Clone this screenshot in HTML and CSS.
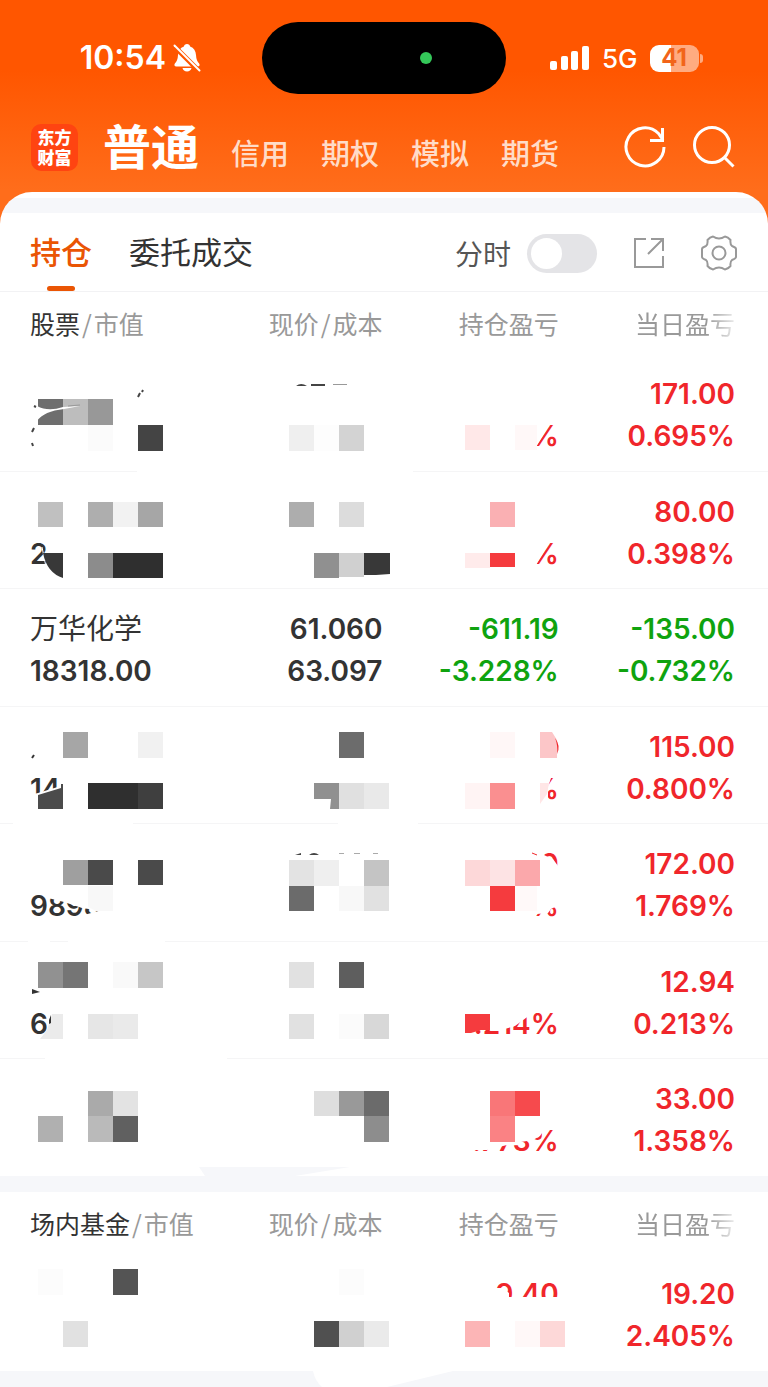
FILE: index.html
```html
<!DOCTYPE html>
<html lang="zh-CN">

<head>
  <meta charset="utf-8" />
  <meta name="viewport" content="width=device-width, initial-scale=1" />
  <title>持仓</title>
  <link rel="stylesheet" href="styles.css">
</head>

<body>
<header class="top">
  <div class="status">
    <div class="status-left">
      <span class="clock">10:54</span>
      <svg class="bell" width="28" height="30" viewBox="0 0 28 30">
        <path d="M14 1c1.700 0 2.900 1 3.100 2.500 3.800 1.300 5.700 4.500 5.900 8.500.2 4.500 1.500 6.500 3 8.300 1.200 1.600.6 3.200-1.400 3.200H3.400c-2 0-2.600-1.600-1.400-3.200 1.500-1.800 2.800-3.800 3-8.300.2-4 2.100-7.200 5.900-8.500C11.100 2 12.300 1 14 1z" fill="#fff"/>
        <path d="M9.500 25h9c-.5 2.200-2.200 3.500-4.500 3.500S10 27.200 9.500 25z" fill="#fff"/>
        <path d="M0 2l27 27" stroke="#ff5700" stroke-width="5"/>
        <path d="M1.500 2.500l25 25" stroke="#fff" stroke-width="2" stroke-linecap="round"/>
      </svg>
    </div>
    <div class="island"><span class="dot"></span></div>
    <div class="status-right">
      <svg width="40" height="26" viewBox="0 0 40 26" fill="#fff">
        <rect x="0" y="16" width="7" height="9" rx="2"/>
        <rect x="11" y="11" width="7" height="14" rx="2"/>
        <rect x="21" y="6" width="7" height="19" rx="2"/>
        <rect x="32" y="1" width="7" height="24" rx="2"/>
      </svg>
      <span class="net">5G</span>
      <div class="battery"><span>41</span></div>
    </div>
  </div>

  <nav class="nav">
    <a class="logo" href="#"><span>东方</span><span>财富</span></a>
    <div class="accounts">
      <a class="current" href="#">普通</a>
      <a href="#">信用</a>
      <a href="#">期权</a>
      <a href="#">模拟</a>
      <a href="#">期货</a>
    </div>
    <button class="icon" type="button" aria-label="刷新">
      <svg width="42" height="42" viewBox="0 0 42 42" fill="none" stroke="#fff" stroke-width="3">
        <path d="M40 21A19 19 0 1 1 34.500 7.500L39 14"/>
        <path d="M38.500 2v12.500H26"/>
      </svg>
    </button>
    <button class="icon" type="button" aria-label="搜索">
      <svg width="42" height="42" viewBox="0 0 42 42" fill="none" stroke="#fff" stroke-width="3">
        <circle cx="19" cy="19" r="17.500"/>
        <path d="M31 31l9.500 9.500"/>
      </svg>
    </button>
  </nav>
</header>

<main class="card">
  <div class="tabs">
    <a class="tab active" href="#">持仓</a>
    <a class="tab" href="#">委托成交</a>
    <label class="switch">分时 <input type="checkbox" role="switch"></label>
    <button class="icon share" type="button" aria-label="分享">
      <svg width="32" height="32" viewBox="0 0 32 32" fill="none" stroke="#999" stroke-width="2">
        <path d="M13 2H2v28h28V19"/>
        <path d="M18 2h12v12M30 2L15 17"/>
      </svg>
    </button>
    <button class="icon" type="button" aria-label="设置">
      <svg width="36" height="36" viewBox="0 0 36 36" fill="none" stroke="#999" stroke-width="2" stroke-linejoin="round">
        <path d="M12 1.500Q18 5.500 24 1.500Q27 2 29.500 5Q29 9.500 31 11Q35 12.500 35 14V22Q35 23.500 31 25Q29 26.500 29.500 31Q27 34 24 34.500Q18 30.500 12 34.500Q9 34 6.500 31Q7 26.500 5 25Q1 23.500 1 22V14Q1 12.500 5 11Q7 9.500 6.500 5Q9 2 12 1.500z"/>
        <circle cx="18" cy="18" r="6.500"/>
      </svg>
    </button>
  </div>

  <table class="list">
    <thead>
      <tr>
        <th><b>股票</b><i>/</i>市值</th>
        <th>现价<i>/</i>成本</th>
        <th>持仓盈亏</th>
        <th class="fade">当日盈亏</th>
      </tr>
    </thead>
    <tbody>
      <tr>
        <td>
          <svg class="mosaic" width="176" height="118">
            <rect x="8" y="45" width="25" height="26" fill="#6e6e6e"/>
            <rect x="33" y="45" width="25" height="26" fill="#bdbdbd"/>
            <rect x="58" y="45" width="25" height="26" fill="#989898"/>
            <rect x="58" y="71" width="25" height="26" fill="#fbfbfb"/>
            <rect x="108" y="71" width="25" height="26" fill="#444"/>
            <path d="M7 52Q18 58 33 53L50 52L34 55Q14 57 7 67z" fill="#fff"/>
            <path d="M38 52l12-1" stroke="#999" fill="none"/>
            <path d="M4 52l2 1M2 78l2-4M2 89l1 3M108 43l2-4M112 38l1-2" stroke="#444" stroke-width="2" fill="none"/>
            <rect x="107" y="116" width="276" height="3" fill="#fff"/>
          </svg>
        </td>
        <td>
          <svg class="mosaic" width="176" height="118">
            <path d="M89 32Q94 28 100 32zM104 30h14v2h-14z" fill="#444"/>
            <path d="M126 30h14v1h-14z" fill="#999"/>
            <rect x="82" y="71" width="25" height="26" fill="#efefef"/>
            <rect x="107" y="71" width="25" height="26" fill="#fdfdfd"/>
            <rect x="132" y="71" width="25" height="26" fill="#d3d3d3"/>
          </svg>
        </td>
        <td class="up">
          <p></p><p>%</p>
          <svg class="mosaic" width="176" height="118">
            <path d="M146 68H168L153 93V97H146z" fill="#fff"/>
            <rect x="82" y="71" width="25" height="25" fill="#ffe8e8"/>
            <rect x="132" y="71" width="22" height="25" fill="#fff8f8"/>
          </svg>
        </td>
        <td class="up"><p>171.00</p><p>0.695%</p></td>
      </tr>
      <tr>
        <td>
          <p></p><p>2</p>
          <svg class="mosaic" width="176" height="118">
            <rect x="8" y="30" width="25" height="25" fill="#c0c0c0"/>
            <rect x="58" y="30" width="25" height="25" fill="#aeaeae"/>
            <rect x="83" y="30" width="25" height="25" fill="#f2f2f2"/>
            <rect x="108" y="30" width="25" height="25" fill="#a6a6a6"/>
            <path d="M12 75L16 95L33 110" stroke="#fff" fill="none"/>
            <path d="M13 81H33V106Q17 101 13 81z" fill="#383838"/>
            <rect x="58" y="81" width="25" height="25" fill="#8c8c8c"/>
            <rect x="83" y="81" width="50" height="25" fill="#2f2f2f"/>
          </svg>
        </td>
        <td>
          <svg class="mosaic" width="176" height="118">
            <rect x="82" y="30" width="25" height="25" fill="#adadad"/>
            <rect x="132" y="30" width="25" height="25" fill="#dcdcdc"/>
            <rect x="107" y="81" width="25" height="25" fill="#909090"/>
            <rect x="132" y="81" width="25" height="24" fill="#d0d0d0"/>
            <path d="M157 81h26v21l-14 1l-12 0z" fill="#383838"/>
          </svg>
        </td>
        <td class="up">
          <p></p><p>%</p>
          <svg class="mosaic" width="176" height="118">
            <path d="M146 68H168L153 93V97H146z" fill="#fff"/>
            <rect x="107" y="30" width="25" height="25" fill="#fab0b3"/>
            <rect x="82" y="81" width="25" height="15" fill="#ffebeb"/>
            <rect x="107" y="81" width="25" height="14" fill="#f53b3e"/>
          </svg>
        </td>
        <td class="up"><p>80.00</p><p>0.398%</p></td>
      </tr>
      <tr>
        <td><p class="name">万华化学</p><p>18318.00</p></td>
        <td><p>61.060</p><p>63.097</p></td>
        <td class="down"><p>-611.19</p><p>-3.228%</p></td>
        <td class="down"><p>-135.00</p><p>-0.732%</p></td>
      </tr>
      <tr>
        <td>
          <p></p><p>14</p>
          <svg class="mosaic" width="176" height="118">
            <path d="M2 51l2-3" stroke="#333" stroke-width="2"/>
            <rect x="33" y="25" width="25" height="26" fill="#a6a6a6"/>
            <rect x="108" y="25" width="25" height="26" fill="#f1f1f1"/>
            <path d="M0 88L8 86L31 79V104H0z" fill="#fff"/>
            <path d="M8 88L31 81V77H33V102H8z" fill="#4b4b4b"/>
            <rect x="58" y="76" width="50" height="26" fill="#2f2f2f"/>
            <rect x="108" y="76" width="25" height="26" fill="#3f3f3f"/>
            <rect x="-17" y="115" width="120" height="3" fill="#fff"/>
          </svg>
        </td>
        <td>
          <svg class="mosaic" width="176" height="118">
            <rect x="132" y="25" width="25" height="26" fill="#6c6c6c"/>
            <path d="M107 76H132V102H123L124 92H107z" fill="#909090"/>
            <rect x="132" y="76" width="25" height="26" fill="#e0e0e0"/>
            <rect x="157" y="76" width="25" height="26" fill="#e9e9e9"/>
            <rect x="131" y="115" width="80" height="3" fill="#fff"/>
          </svg>
        </td>
        <td class="up">
          <p></p><p>%</p>
          <svg class="mosaic" width="176" height="118">
            <path d="M146 68H169L165 80V94H146z" fill="#fff"/>
            <rect x="107" y="25" width="25" height="26" fill="#fff7f7"/>
            <path d="M157 25H169L174 33V51H157z" fill="#fcc6c8"/>
            <path d="M172 31Q178 39 174 47Q175 38 172 31z" fill="#f0262b"/>
            <rect x="82" y="76" width="25" height="26" fill="#fff4f4"/>
            <rect x="107" y="76" width="25" height="26" fill="#fa8f90"/>
            <path d="M157 76H166L164 87L157 97z" fill="#ffe6e6"/>
          </svg>
        </td>
        <td class="up"><p>115.00</p><p>0.800%</p></td>
      </tr>
      <tr>
        <td>
          <p></p><p>9898</p>
          <svg class="mosaic" width="176" height="118">
            <path d="M18 66V74L34 78L52 84L72 87V66z" fill="#fff"/>
            <path d="M50 97L54 91L72 86V97z" fill="#fff"/>
            <rect x="33" y="36" width="25" height="25" fill="#9f9f9f"/>
            <rect x="58" y="36" width="25" height="25" fill="#4a4a4a"/>
            <rect x="108" y="36" width="25" height="25" fill="#4a4a4a"/>
            <path d="M58 62h25v25H66L58 83z" fill="#f8f8f8"/>
            <rect x="-2" y="116" width="22" height="3" fill="#fff"/>
            <rect x="38" y="116" width="97" height="3" fill="#fff"/>
          </svg>
        </td>
        <td>
          <svg class="mosaic" width="176" height="118">
            <path d="M88 31L94 29V31zM102 31Q107 27 112 31z" fill="#444"/>
            <path d="M132 29h5v1h-5zM147 29h6v1h-6zM166 29h5v1h-5z" fill="#aaa"/>
            <rect x="82" y="36" width="25" height="26" fill="#e3e3e3"/>
            <rect x="107" y="36" width="25" height="26" fill="#efefef"/>
            <rect x="157" y="36" width="25" height="26" fill="#c4c4c4"/>
            <rect x="82" y="62" width="25" height="25" fill="#6b6b6b"/>
            <rect x="132" y="62" width="25" height="25" fill="#f8f8f8"/>
            <rect x="157" y="62" width="25" height="25" fill="#e1e1e1"/>
          </svg>
        </td>
        <td class="up">
          <p>0</p><p>%</p>
          <svg class="mosaic" width="176" height="118">
            <path d="M154 30H159L163 32L170 35L175 42H178V56H154z" fill="#fff"/>
            <path d="M146 68H178V83H172L168 85L165 89L154 90H146z" fill="#fff"/>
            <path d="M149 29l5 2" stroke="#f0262b"/>
            <rect x="82" y="36" width="25" height="26" fill="#fdd8d9"/>
            <rect x="107" y="36" width="25" height="26" fill="#fde3e4"/>
            <rect x="132" y="36" width="25" height="26" fill="#fba8ab"/>
            <rect x="107" y="62" width="25" height="25" fill="#f53b3e"/>
            <rect x="132" y="62" width="22" height="25" fill="#fff9f9"/>
          </svg>
        </td>
        <td class="up"><p>172.00</p><p>1.769%</p></td>
      </tr>
      <tr>
        <td>
          <p></p><p>6</p>
          <svg class="mosaic" width="176" height="118">
            <rect x="8" y="20" width="25" height="26" fill="#919191"/>
            <rect x="33" y="20" width="25" height="26" fill="#757575"/>
            <rect x="83" y="20" width="25" height="26" fill="#f9f9f9"/>
            <rect x="108" y="20" width="25" height="26" fill="#c6c6c6"/>
            <path d="M2 47L10 50L2 52z" fill="#333"/>
            <path d="M22 72H33V97H10L17 88z" fill="#ebebeb"/>
            <path d="M21 73V81L19 82V78z" fill="#333"/>
            <rect x="58" y="72" width="25" height="25" fill="#e6e6e6"/>
            <rect x="83" y="72" width="25" height="25" fill="#eaeaea"/>
            <rect x="15" y="115" width="182" height="3" fill="#fff"/>
          </svg>
        </td>
        <td>
          <svg class="mosaic" width="176" height="118">
            <rect x="82" y="20" width="25" height="26" fill="#e1e1e1"/>
            <rect x="132" y="20" width="25" height="26" fill="#5e5e5e"/>
            <rect x="82" y="72" width="25" height="25" fill="#e1e1e1"/>
            <rect x="132" y="72" width="25" height="25" fill="#fbfbfb"/>
            <rect x="157" y="72" width="25" height="25" fill="#d8d8d8"/>
          </svg>
        </td>
        <td class="up">
          <p></p><p>.214%</p>
          <svg class="mosaic" width="176" height="118">
            <path d="M100 68H150L147 73L132 84L118 88H100z" fill="#fff"/>
            <path d="M82 72h25v16L98 88L88 91H82z" fill="#f53b3e"/>
          </svg>
        </td>
        <td class="up"><p>12.94</p><p>0.213%</p></td>
      </tr>
      <tr>
        <td>
          <svg class="mosaic" width="176" height="117">
            <rect x="58" y="32" width="25" height="25" fill="#aaa"/>
            <rect x="83" y="32" width="25" height="25" fill="#e3e3e3"/>
            <rect x="8" y="57" width="25" height="26" fill="#b0b0b0"/>
            <rect x="58" y="57" width="25" height="26" fill="#bababa"/>
            <rect x="83" y="57" width="25" height="26" fill="#606060"/>
            <path d="M169 108H320L265 117H175z" fill="#f6f7fa"/>
          </svg>
        </td>
        <td>
          <svg class="mosaic" width="176" height="117">
            <rect x="107" y="32" width="25" height="25" fill="#dedede"/>
            <rect x="132" y="32" width="25" height="25" fill="#999"/>
            <rect x="157" y="32" width="25" height="25" fill="#6b6b6b"/>
            <rect x="157" y="57" width="25" height="26" fill="#8d8d8d"/>
          </svg>
        </td>
        <td class="up">
          <p></p><p>.773%</p>
          <svg class="mosaic" width="176" height="117">
            <path d="M88 68H163L157 77L150 81L132 84L104 91L94 91H88z" fill="#fff"/>
            <rect x="107" y="32" width="25" height="25" fill="#f97678"/>
            <rect x="132" y="32" width="25" height="25" fill="#f64a4d"/>
            <rect x="107" y="57" width="25" height="26" fill="#fa8284"/>
          </svg>
        </td>
        <td class="up"><p>33.00</p><p>1.358%</p></td>
      </tr>
    </tbody>
  </table>

  <table class="list">
    <thead>
      <tr>
        <th><b>场内基金</b><i>/</i>市值</th>
        <th>现价<i>/</i>成本</th>
        <th>持仓盈亏</th>
        <th class="fade">当日盈亏</th>
      </tr>
    </thead>
    <tbody>
      <tr>
        <td>
          <svg class="mosaic" width="176" height="117">
            <rect x="8" y="15" width="25" height="26" fill="#fcfcfc"/>
            <rect x="83" y="15" width="25" height="26" fill="#545454"/>
            <rect x="33" y="67" width="25" height="26" fill="#e1e1e1"/>
          </svg>
        </td>
        <td>
          <svg class="mosaic" width="176" height="117">
            <rect x="132" y="15" width="25" height="26" fill="#fcfcfc"/>
            <rect x="107" y="67" width="25" height="26" fill="#505050"/>
            <rect x="132" y="67" width="25" height="26" fill="#d0d0d0"/>
            <rect x="157" y="67" width="25" height="26" fill="#eaeaea"/>
            <path d="M106 117Q108 127 115 133H180L246 117z" fill="#fff"/>
          </svg>
        </td>
        <td class="up">
          <p>9.40</p><p></p>
          <svg class="mosaic" width="176" height="117">
            <path d="M110 43H178V54H110zM110 34H120L126 39V46H110z" fill="#fff"/>
            <rect x="82" y="67" width="25" height="26" fill="#fcb5b6"/>
            <rect x="132" y="67" width="25" height="26" fill="#fff8f8"/>
            <rect x="157" y="67" width="25" height="26" fill="#fdd8d8"/>
          </svg>
        </td>
        <td class="up"><p>19.20</p><p>2.405%</p></td>
      </tr>
    </tbody>
  </table>
</main>
</body>
</html>
```
FILE: styles.css
```css
* { box-sizing: border-box; }
body {
  margin: 0;
  background: #f6f7fa;
  color: #333;
  font-family: Inter, "Noto Sans CJK SC", sans-serif;
}
a { color: inherit; text-decoration: none; }
p { margin: 0; }
svg { display: block; }
button { border: 0; padding: 0; background: none; }

/* header */
.top {
  height: 232px;
  padding-top: 22px;
  background: linear-gradient(#ff5600 70px, #ff6d1b 190px);
  color: #fff;
}
.status {
  display: grid;
  grid-template-columns: 1fr 244px 1fr;
  align-items: center;
}
.status-left, .status-right { display: flex; align-items: center; }
.status-left { justify-content: flex-end; gap: 7px; padding-right: 61px; }
.status-right { gap: 12px; padding-left: 44px; }
.clock { font-size: 32px; font-weight: 600; line-height: 38px; }
.island {
  height: 72px;
  padding: 30px 74px;
  border-radius: 36px;
  background: #000;
}
.dot {
  display: block;
  width: 12px;
  height: 12px;
  margin-left: auto;
  border-radius: 50%;
  background: #34c759;
}
.net { font-size: 26px; font-weight: 500; }
.battery {
  position: relative;
  width: 49px;
  height: 27px;
  border-radius: 9px;
  background: linear-gradient(90deg, #fff 42%, #ffab80 42%);
  color: #f26419;
  font-size: 24px;
  font-weight: 700;
  line-height: 26px;
  text-align: center;
}
.battery::after {
  content: "";
  position: absolute;
  top: 9px;
  right: -4px;
  width: 3px;
  height: 9px;
  border-radius: 0 3px 3px 0;
  background: #ffab80;
}

.nav {
  display: flex;
  align-items: center;
  height: 106px;
  padding: 0 33px 0 31px;
}
.logo {
  width: 47px;
  height: 47px;
  padding-top: 3px;
  border-radius: 10px;
  background: #ff4411;
  font-family: "Noto Sans CJK SC", sans-serif;
  font-size: 17px;
  font-weight: 900;
  line-height: 20px;
  text-align: center;
}
.logo span { display: block; }
.accounts {
  display: flex;
  flex: 1;
  align-items: center;
  gap: 32px;
  margin-left: 25px;
  padding-top: 2px;
  color: #ffdcc8;
  font-size: 29px;
  font-weight: 500;
  line-height: 44px;
}
.accounts a { padding-top: 14px; }
.accounts .current {
  padding-top: 0;
  color: #fff;
  font-size: 48px;
  font-weight: 700;
  line-height: 60px;
}
.nav .icon + .icon { margin-left: 27px; }

/* card */
.card {
  margin-top: -40px;
  padding-top: 21px;
  border-radius: 32px 32px 0 0;
  background: linear-gradient(#fff 6px, #f6f7fa 6px, #f6f7fa 21px, #fff 21px, #fff 100px, transparent 100px);
}
.tabs {
  display: flex;
  align-items: center;
  height: 79px;
  padding: 2px 31px 0 30px;
  border-bottom: 1px solid #f2f2f4;
}
.tab {
  position: relative;
  margin-right: 37px;
  font-size: 31px;
  font-weight: 400;
  line-height: 76px;
}
.active { color: #ea5504; font-weight: 500; }
.active::after {
  content: "";
  position: absolute;
  left: 50%;
  bottom: 0;
  width: 28px;
  height: 5px;
  margin-left: -14px;
  border-radius: 3px;
  background: #ea5504;
}
.switch {
  display: flex;
  align-items: center;
  gap: 16px;
  margin-left: auto;
  color: #555;
  font-size: 28px;
}
.switch input {
  appearance: none;
  width: 70px;
  height: 39px;
  margin: 0;
  padding: 4px;
  border-radius: 20px;
  background: #e4e4e7;
}
.switch input::before {
  content: "";
  display: block;
  width: 31px;
  height: 31px;
  border-radius: 50%;
  background: #fff;
}
.switch input:checked::before { margin-left: auto; }
.share { margin: 0 36px; }

/* positions */
.list { display: block; margin-bottom: 16px; background: #fff; }
.list thead, .list tbody { display: block; }
.list tr {
  display: grid;
  grid-template-columns: repeat(4, 1fr);
  padding: 0 33px 0 30px;
}
.list th {
  padding: 0;
  color: #999;
  font-family: "Noto Sans CJK SC", sans-serif;
  font-size: 25px;
  font-weight: 400;
  line-height: 62px;
  text-align: right;
  white-space: nowrap;
}
.list th b { color: #333; font-weight: 400; }
.list th i { margin: 0 2px; font-style: normal; }
.list th:first-child, .list td:first-child { text-align: left; }
.list .fade { mask-image: linear-gradient(90deg, #000 84%, transparent 104%); }

.list tbody tr { height: 118px; border-bottom: 1px solid #f5f5f6; }
.list tbody tr:nth-child(even) { height: 117px; }
.list tbody tr:last-child { height: 117px; border-bottom: 0; }
.list td {
  position: relative;
  padding: 19px 0 0;
  font-size: 28px;
  font-weight: 600;
  text-align: right;
}
.list p { height: 42px; line-height: 42px; }
.list .name { font-weight: 400; }
.list .up { color: #f0262b; }
.list .down { color: #0fa30f; }

.mosaic {
  position: absolute;
  top: 0;
  right: 0;
  overflow: visible;
}
td:first-child .mosaic { left: 0; right: auto; }
```
